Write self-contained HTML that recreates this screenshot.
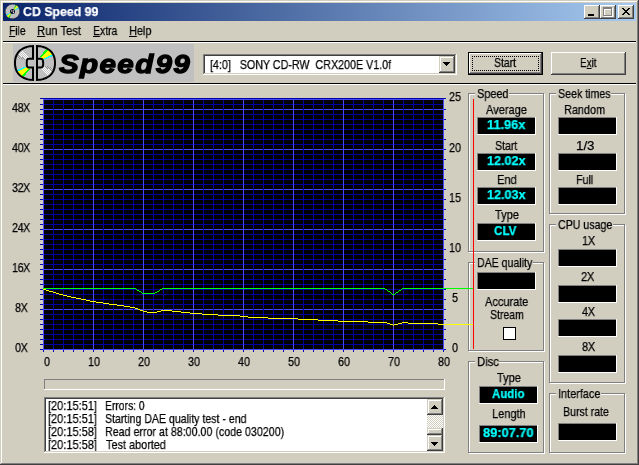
<!DOCTYPE html>
<html><head><meta charset='utf-8'><title>CD Speed 99</title><style>html,body{margin:0;padding:0}
body{width:639px;height:465px;overflow:hidden;position:relative;background:#d1cec0;font:13px/13px "Liberation Sans",sans-serif;color:#000}
body>div,body>svg{position:absolute;display:block}
.t{-webkit-text-stroke:0.25px currentColor;white-space:pre;transform-origin:0 0;height:13px;will-change:transform}
u{text-decoration:underline;text-underline-offset:1px;text-decoration-thickness:1px}
</style></head><body>
<div style='left:1px;top:1px;width:636px;height:1px;background:#fff;'></div>
<div style='left:1px;top:1px;width:1px;height:462px;background:#fff;'></div>
<div style='left:637px;top:1px;width:1px;height:463px;background:#808080;'></div>
<div style='left:1px;top:463px;width:637px;height:1px;background:#808080;'></div>
<div style='left:638px;top:0px;width:1px;height:465px;background:#404040;'></div>
<div style='left:0px;top:464px;width:639px;height:1px;background:#404040;'></div>
<div style='left:3px;top:3px;width:633px;height:18px;background:linear-gradient(90deg,#0a246a,#a6caf0);'></div>
<svg style='left:5px;top:4px' width='16' height='16' viewBox='0 0 16 16'><circle cx='7.5' cy='7.5' r='7.2' fill='#c0c0c0'/><circle cx='7.5' cy='7.5' r='7.2' fill='none' stroke='#303030' stroke-width='0.9' stroke-dasharray='1.1 1.16'/><polygon points='7.50,7.50 10.66,1.03 10.96,1.19 11.26,1.36 11.55,1.55 11.83,1.75' fill='#00e000'/><polygon points='7.50,7.50 11.83,1.75 12.22,2.07 12.59,2.41 12.93,2.78 13.25,3.17' fill='#ffff00'/><polygon points='7.50,7.50 13.25,3.17 13.45,3.45 13.64,3.74 13.81,4.04 13.97,4.34' fill='#00e0ff'/><polygon points='7.50,7.50 4.34,13.97 4.04,13.81 3.74,13.64 3.45,13.45 3.17,13.25' fill='#00e000'/><polygon points='7.50,7.50 3.17,13.25 2.78,12.93 2.41,12.59 2.07,12.22 1.75,11.83' fill='#ffff00'/><polygon points='7.50,7.50 1.75,11.83 1.55,11.55 1.36,11.26 1.19,10.96 1.03,10.66' fill='#00e0ff'/><circle cx='7.5' cy='7.6' r='2.5' fill='#0a0a28'/><circle cx='6.7' cy='6.9' r='0.65' fill='#fff'/><circle cx='8.4' cy='6.9' r='0.65' fill='#fff'/><circle cx='8.4' cy='8.6' r='0.65' fill='#fff'/></svg>
<div class='t' style='left:23.33px;top:5px;transform:scaleX(0.9478);font-weight:bold;color:#fff'>CD Speed 99</div>
<div style='left:584px;top:5px;width:16px;height:14px;background:#d1cec0;'></div>
<div style='left:584px;top:5px;width:15px;height:1px;background:#fff;'></div>
<div style='left:584px;top:5px;width:1px;height:13px;background:#fff;'></div>
<div style='left:584px;top:18px;width:16px;height:1px;background:#404040;'></div>
<div style='left:599px;top:5px;width:1px;height:14px;background:#404040;'></div>
<div style='left:585px;top:17px;width:14px;height:1px;background:#808080;'></div>
<div style='left:598px;top:6px;width:1px;height:12px;background:#808080;'></div>
<div style='left:600px;top:5px;width:16px;height:14px;background:#d1cec0;'></div>
<div style='left:600px;top:5px;width:15px;height:1px;background:#fff;'></div>
<div style='left:600px;top:5px;width:1px;height:13px;background:#fff;'></div>
<div style='left:600px;top:18px;width:16px;height:1px;background:#404040;'></div>
<div style='left:615px;top:5px;width:1px;height:14px;background:#404040;'></div>
<div style='left:601px;top:17px;width:14px;height:1px;background:#808080;'></div>
<div style='left:614px;top:6px;width:1px;height:12px;background:#808080;'></div>
<div style='left:618px;top:5px;width:16px;height:14px;background:#d1cec0;'></div>
<div style='left:618px;top:5px;width:15px;height:1px;background:#fff;'></div>
<div style='left:618px;top:5px;width:1px;height:13px;background:#fff;'></div>
<div style='left:618px;top:18px;width:16px;height:1px;background:#404040;'></div>
<div style='left:633px;top:5px;width:1px;height:14px;background:#404040;'></div>
<div style='left:619px;top:17px;width:14px;height:1px;background:#808080;'></div>
<div style='left:632px;top:6px;width:1px;height:12px;background:#808080;'></div>
<div style='left:588px;top:14px;width:6px;height:2px;background:#000;'></div>
<div style='left:604px;top:8px;width:9px;height:9px;box-sizing:border-box;border:1px solid #fff;border-top:2px solid #fff'></div>
<div style='left:603px;top:7px;width:9px;height:9px;box-sizing:border-box;border:1px solid #808080;border-top:2px solid #808080'></div>
<svg style='left:622px;top:8px' width='8' height='7' viewBox='0 0 8 7' shape-rendering='crispEdges'><path d='M0 0h2v1h1v1h2v-1h1v-1h2v1h-1v1h-1v1h-1v1h1v1h1v1h1v1h-2v-1h-1v-1h-2v1h-1v1h-2v-1h1v-1h1v-1h1v-1h-1v-1h-1v-1h-1z' fill='#000'/></svg>
<div class='t' style='left:8.96px;top:24px;transform:scaleX(0.7922);'><u>F</u>ile</div>
<div class='t' style='left:36.64px;top:24px;transform:scaleX(0.8620);'><u>R</u>un Test</div>
<div class='t' style='left:92.70px;top:24px;transform:scaleX(0.8034);'><u>E</u>xtra</div>
<div class='t' style='left:128.56px;top:24px;transform:scaleX(0.8396);'><u>H</u>elp</div>
<div style='left:3px;top:41px;width:633px;height:1px;background:#000;'></div>
<div style='left:3px;top:42px;width:633px;height:1px;background:#fff;'></div>
<div style='left:3px;top:83px;width:633px;height:1px;background:#000;'></div>
<div style='left:3px;top:84px;width:633px;height:1px;background:#fff;'></div>
<svg style='left:13px;top:44px' width='181' height='38' viewBox='0 0 181 38'>
<rect width='181' height='38' fill='#c0c0c0'/>
<g shape-rendering='crispEdges'><rect x='8' y='6' width='1' height='1' fill='#ffffff'/><rect x='7' y='7' width='1' height='1' fill='#ffffff'/><rect x='9' y='7' width='1' height='1' fill='#ffffff'/><rect x='6' y='8' width='1' height='1' fill='#ffffff'/><rect x='8' y='8' width='1' height='1' fill='#ffffff'/><rect x='10' y='8' width='1' height='1' fill='#ffffff'/><rect x='5' y='9' width='1' height='1' fill='#ffffff'/><rect x='7' y='9' width='1' height='1' fill='#ffffff'/><rect x='9' y='9' width='1' height='1' fill='#ffffff'/><rect x='11' y='9' width='1' height='1' fill='#ffffff'/><rect x='6' y='10' width='1' height='1' fill='#ffffff'/><rect x='8' y='10' width='1' height='1' fill='#ffffff'/><rect x='10' y='10' width='1' height='1' fill='#ffffff'/><rect x='12' y='10' width='1' height='1' fill='#ffffff'/><rect x='7' y='11' width='1' height='1' fill='#ffffff'/><rect x='9' y='11' width='1' height='1' fill='#ffffff'/><rect x='11' y='11' width='1' height='1' fill='#ffffff'/><rect x='13' y='11' width='1' height='1' fill='#ffffff'/><rect x='8' y='12' width='1' height='1' fill='#ffffff'/><rect x='10' y='12' width='1' height='1' fill='#ffffff'/><rect x='12' y='12' width='1' height='1' fill='#ffffff'/><rect x='14' y='12' width='1' height='1' fill='#ffffff'/><rect x='11' y='13' width='1' height='1' fill='#ffffff'/><rect x='13' y='13' width='1' height='1' fill='#ffffff'/><rect x='15' y='13' width='1' height='1' fill='#ffffff'/><rect x='12' y='14' width='1' height='1' fill='#ffffff'/><rect x='14' y='14' width='1' height='1' fill='#ffffff'/><rect x='5' y='11' width='1' height='1' fill='#909090'/><rect x='4' y='12' width='1' height='1' fill='#909090'/><rect x='5' y='12' width='1' height='1' fill='#d0d0d0'/><rect x='6' y='12' width='1' height='1' fill='#909090'/><rect x='7' y='12' width='1' height='1' fill='#d0d0d0'/><rect x='4' y='13' width='1' height='1' fill='#d0d0d0'/><rect x='5' y='13' width='1' height='1' fill='#909090'/><rect x='6' y='13' width='1' height='1' fill='#d0d0d0'/><rect x='7' y='13' width='1' height='1' fill='#909090'/><rect x='8' y='13' width='1' height='1' fill='#d0d0d0'/><rect x='9' y='13' width='1' height='1' fill='#909090'/><rect x='5' y='14' width='1' height='1' fill='#d0d0d0'/><rect x='6' y='14' width='1' height='1' fill='#909090'/><rect x='7' y='14' width='1' height='1' fill='#d0d0d0'/><rect x='8' y='14' width='1' height='1' fill='#909090'/><rect x='9' y='14' width='1' height='1' fill='#d0d0d0'/><rect x='10' y='14' width='1' height='1' fill='#909090'/><rect x='11' y='14' width='1' height='1' fill='#d0d0d0'/><rect x='9' y='15' width='1' height='1' fill='#909090'/><rect x='10' y='15' width='1' height='1' fill='#d0d0d0'/><rect x='11' y='15' width='1' height='1' fill='#909090'/><rect x='12' y='15' width='1' height='1' fill='#d0d0d0'/><rect x='13' y='15' width='1' height='1' fill='#909090'/><polygon points='3.93,25.94 4.01,26.13 4.10,26.32 4.19,26.51 4.28,26.70 4.38,26.89 4.48,27.08 4.58,27.26 4.68,27.45 14.63,22.59 14.59,22.51 14.55,22.43 14.52,22.35 14.48,22.27 14.44,22.19 14.41,22.10 14.38,22.02 14.34,21.94' fill='#00ffff'/><polygon points='4.68,27.45 5.08,28.09 5.51,28.71 5.98,29.31 6.48,29.87 7.00,30.41 7.55,30.91 8.12,31.39 8.72,31.83 16.10,24.70 15.88,24.46 15.67,24.22 15.47,23.96 15.28,23.70 15.10,23.44 14.93,23.16 14.78,22.88 14.63,22.59' fill='#ffff00'/><polygon points='8.72,31.83 8.95,31.99 9.19,32.15 9.43,32.31 9.67,32.45 9.92,32.60 10.16,32.74 10.41,32.88 10.66,33.01 16.84,25.37 16.74,25.29 16.65,25.21 16.55,25.13 16.46,25.05 16.37,24.96 16.28,24.87 16.19,24.79 16.10,24.70' fill='#00ff00'/><rect x='29' y='23' width='1' height='1' fill='#ffffff'/><rect x='31' y='23' width='1' height='1' fill='#ffffff'/><rect x='28' y='24' width='1' height='1' fill='#ffffff'/><rect x='30' y='24' width='1' height='1' fill='#ffffff'/><rect x='32' y='24' width='1' height='1' fill='#ffffff'/><rect x='29' y='25' width='1' height='1' fill='#ffffff'/><rect x='31' y='25' width='1' height='1' fill='#ffffff'/><rect x='33' y='25' width='1' height='1' fill='#ffffff'/><rect x='35' y='25' width='1' height='1' fill='#ffffff'/><rect x='30' y='26' width='1' height='1' fill='#ffffff'/><rect x='32' y='26' width='1' height='1' fill='#ffffff'/><rect x='34' y='26' width='1' height='1' fill='#ffffff'/><rect x='36' y='26' width='1' height='1' fill='#ffffff'/><rect x='31' y='27' width='1' height='1' fill='#ffffff'/><rect x='33' y='27' width='1' height='1' fill='#ffffff'/><rect x='35' y='27' width='1' height='1' fill='#ffffff'/><rect x='37' y='27' width='1' height='1' fill='#ffffff'/><rect x='32' y='28' width='1' height='1' fill='#ffffff'/><rect x='34' y='28' width='1' height='1' fill='#ffffff'/><rect x='36' y='28' width='1' height='1' fill='#ffffff'/><rect x='38' y='28' width='1' height='1' fill='#ffffff'/><rect x='33' y='29' width='1' height='1' fill='#ffffff'/><rect x='35' y='29' width='1' height='1' fill='#ffffff'/><rect x='37' y='29' width='1' height='1' fill='#ffffff'/><rect x='34' y='30' width='1' height='1' fill='#ffffff'/><rect x='36' y='30' width='1' height='1' fill='#ffffff'/><rect x='35' y='31' width='1' height='1' fill='#ffffff'/><rect x='30' y='22' width='1' height='1' fill='#909090'/><rect x='31' y='22' width='1' height='1' fill='#d0d0d0'/><rect x='32' y='22' width='1' height='1' fill='#909090'/><rect x='33' y='22' width='1' height='1' fill='#d0d0d0'/><rect x='34' y='22' width='1' height='1' fill='#909090'/><rect x='32' y='23' width='1' height='1' fill='#d0d0d0'/><rect x='33' y='23' width='1' height='1' fill='#909090'/><rect x='34' y='23' width='1' height='1' fill='#d0d0d0'/><rect x='35' y='23' width='1' height='1' fill='#909090'/><rect x='36' y='23' width='1' height='1' fill='#d0d0d0'/><rect x='37' y='23' width='1' height='1' fill='#909090'/><rect x='38' y='23' width='1' height='1' fill='#d0d0d0'/><rect x='34' y='24' width='1' height='1' fill='#909090'/><rect x='35' y='24' width='1' height='1' fill='#d0d0d0'/><rect x='36' y='24' width='1' height='1' fill='#909090'/><rect x='37' y='24' width='1' height='1' fill='#d0d0d0'/><rect x='38' y='24' width='1' height='1' fill='#909090'/><rect x='39' y='24' width='1' height='1' fill='#d0d0d0'/><rect x='36' y='25' width='1' height='1' fill='#d0d0d0'/><rect x='37' y='25' width='1' height='1' fill='#909090'/><rect x='38' y='25' width='1' height='1' fill='#d0d0d0'/><rect x='39' y='25' width='1' height='1' fill='#909090'/><rect x='38' y='26' width='1' height='1' fill='#909090'/><polygon points='40.07,12.06 39.99,11.87 39.90,11.68 39.81,11.49 39.72,11.30 39.62,11.11 39.52,10.92 39.42,10.74 39.32,10.55 29.37,15.41 29.41,15.49 29.45,15.57 29.48,15.65 29.52,15.73 29.56,15.81 29.59,15.90 29.62,15.98 29.66,16.06' fill='#00ffff'/><polygon points='39.32,10.55 38.92,9.91 38.49,9.29 38.02,8.69 37.52,8.13 37.00,7.59 36.45,7.09 35.88,6.61 35.28,6.17 27.90,13.30 28.12,13.54 28.33,13.78 28.53,14.04 28.72,14.30 28.90,14.56 29.07,14.84 29.22,15.12 29.37,15.41' fill='#ffff00'/><polygon points='35.28,6.17 35.05,6.01 34.81,5.85 34.57,5.69 34.33,5.55 34.08,5.40 33.84,5.26 33.59,5.12 33.34,4.99 27.16,12.63 27.26,12.71 27.35,12.79 27.45,12.87 27.54,12.95 27.63,13.04 27.72,13.13 27.81,13.21 27.90,13.30' fill='#00ff00'/></g>
<g fill='none' stroke='#000' stroke-width='2' stroke-linejoin='miter'>
<path d='M20,14.7 L20.00,2.04 L18.26,2.16 L16.66,2.36 L15.15,2.64 L13.73,3.01 L12.38,3.45 L11.10,3.98 L9.90,4.58 L8.77,5.25 L7.72,6.00 L6.76,6.82 L5.87,7.71 L5.07,8.66 L4.36,9.68 L3.74,10.76 L3.21,11.90 L2.78,13.11 L2.44,14.39 L2.20,15.74 L2.05,17.21 L2.00,19.00 L2.05,20.79 L2.20,22.26 L2.44,23.61 L2.78,24.89 L3.21,26.10 L3.74,27.24 L4.36,28.32 L5.07,29.34 L5.87,30.29 L6.76,31.18 L7.72,32.00 L8.77,32.75 L9.90,33.42 L11.10,34.02 L12.38,34.55 L13.73,34.99 L15.15,35.36 L16.66,35.64 L18.26,35.84 L20.00,35.96 V23.6 H15.7 A2.0,4.45 0 0 1 15.7,14.7 Z'/>
<path d='M24.00,2.04 L25.74,2.16 L27.34,2.36 L28.85,2.64 L30.27,3.01 L31.62,3.45 L32.90,3.98 L34.10,4.58 L35.23,5.25 L36.28,6.00 L37.24,6.82 L38.13,7.71 L38.93,8.66 L39.64,9.68 L40.26,10.76 L40.79,11.90 L41.22,13.11 L41.56,14.39 L41.80,15.74 L41.95,17.21 L42.00,19.00 L41.95,20.79 L41.80,22.26 L41.56,23.61 L41.22,24.89 L40.79,26.10 L40.26,27.24 L39.64,28.32 L38.93,29.34 L38.13,30.29 L37.24,31.18 L36.28,32.00 L35.23,32.75 L34.10,33.42 L32.90,34.02 L31.62,34.55 L30.27,34.99 L28.85,35.36 L27.34,35.64 L25.74,35.84 L24.00,35.96 Z'/>
<path d='M24,14.7 H27.8 A2.4,4.45 0 0 1 27.8,23.6 H24'/>
</g>
</svg>
<div class='t' style='left:59.38px;top:48.5px;transform:scaleX(1.1378);font:italic bold 26px/30px Liberation Sans;-webkit-text-stroke:1.3px #000;letter-spacing:1.2px;color:#000'>Speed<span style="margin-left:0.8px">99</span></div>
<div style='left:203px;top:54px;width:254px;height:21px;background:#fff;'></div>
<div style='left:203px;top:54px;width:253px;height:1px;background:#808080;'></div>
<div style='left:203px;top:54px;width:1px;height:20px;background:#808080;'></div>
<div style='left:204px;top:55px;width:251px;height:1px;background:#404040;'></div>
<div style='left:204px;top:55px;width:1px;height:18px;background:#404040;'></div>
<div style='left:203px;top:74px;width:254px;height:1px;background:#fff;'></div>
<div style='left:456px;top:54px;width:1px;height:21px;background:#fff;'></div>
<div style='left:204px;top:73px;width:252px;height:1px;background:#d1cec0;'></div>
<div style='left:455px;top:55px;width:1px;height:19px;background:#d1cec0;'></div>
<div style='left:439px;top:56px;width:16px;height:17px;background:#d1cec0;'></div>
<div style='left:439px;top:56px;width:15px;height:1px;background:#d1cec0;'></div>
<div style='left:439px;top:56px;width:1px;height:16px;background:#d1cec0;'></div>
<div style='left:440px;top:57px;width:13px;height:1px;background:#fff;'></div>
<div style='left:440px;top:57px;width:1px;height:14px;background:#fff;'></div>
<div style='left:439px;top:72px;width:16px;height:1px;background:#404040;'></div>
<div style='left:454px;top:56px;width:1px;height:17px;background:#404040;'></div>
<div style='left:440px;top:71px;width:14px;height:1px;background:#808080;'></div>
<div style='left:453px;top:57px;width:1px;height:15px;background:#808080;'></div>
<div style='left:443px;top:62px;width:7px;height:1px;background:#000;'></div>
<div style='left:444px;top:63px;width:5px;height:1px;background:#000;'></div>
<div style='left:445px;top:64px;width:3px;height:1px;background:#000;'></div>
<div style='left:446px;top:65px;width:1px;height:1px;background:#000;'></div>
<div class='t' style='left:209.78px;top:58px;transform:scaleX(0.8237);'>[4:0]   SONY CD-RW  CRX200E V1.0f</div>
<div style='left:468px;top:52px;width:75px;height:23px;background:#d1cec0;'></div>
<div style='left:468px;top:52px;width:75px;height:23px;box-sizing:border-box;border:1px solid #000'></div>
<div style='left:469px;top:53px;width:72px;height:1px;background:#fff;'></div>
<div style='left:469px;top:53px;width:1px;height:20px;background:#fff;'></div>
<div style='left:469px;top:73px;width:73px;height:1px;background:#404040;'></div>
<div style='left:541px;top:53px;width:1px;height:21px;background:#404040;'></div>
<div style='left:470px;top:72px;width:71px;height:1px;background:#808080;'></div>
<div style='left:540px;top:54px;width:1px;height:19px;background:#808080;'></div>
<div style='left:472px;top:56px;width:67px;height:15px;box-sizing:border-box;border:1px dotted #000'></div>
<div class='t' style='left:494.30px;top:56px;transform:scaleX(0.8038);'>Start</div>
<div style='left:551px;top:52px;width:75px;height:23px;background:#d1cec0;'></div>
<div style='left:551px;top:52px;width:74px;height:1px;background:#fff;'></div>
<div style='left:551px;top:52px;width:1px;height:22px;background:#fff;'></div>
<div style='left:551px;top:74px;width:75px;height:1px;background:#404040;'></div>
<div style='left:625px;top:52px;width:1px;height:23px;background:#404040;'></div>
<div style='left:552px;top:73px;width:73px;height:1px;background:#808080;'></div>
<div style='left:624px;top:53px;width:1px;height:21px;background:#808080;'></div>
<div class='t' style='left:580.14px;top:56px;transform:scaleX(0.7610);'>E<u>x</u>it</div>
<div class='t' style='left:12.17px;top:101px;transform:scaleX(0.8300);letter-spacing:-0.6px'>48X</div>
<div class='t' style='left:12.17px;top:141px;transform:scaleX(0.8300);letter-spacing:-0.6px'>40X</div>
<div class='t' style='left:12.07px;top:181px;transform:scaleX(0.8300);letter-spacing:-0.6px'>32X</div>
<div class='t' style='left:11.97px;top:221px;transform:scaleX(0.8300);letter-spacing:-0.6px'>24X</div>
<div class='t' style='left:11.86px;top:261px;transform:scaleX(0.8300);letter-spacing:-0.6px'>16X</div>
<div class='t' style='left:14.77px;top:301px;transform:scaleX(0.8300);letter-spacing:-0.6px'>8X</div>
<div class='t' style='left:14.77px;top:341px;transform:scaleX(0.8300);letter-spacing:-0.6px'>0X</div>
<div class='t' style='left:449.38px;top:90px;transform:scaleX(0.8300);'>25</div>
<div class='t' style='left:449.38px;top:141px;transform:scaleX(0.8300);'>20</div>
<div class='t' style='left:449.27px;top:191px;transform:scaleX(0.8300);'>15</div>
<div class='t' style='left:449.27px;top:241px;transform:scaleX(0.8300);'>10</div>
<div class='t' style='left:452.49px;top:291px;transform:scaleX(0.8300);'>5</div>
<div class='t' style='left:452.49px;top:341px;transform:scaleX(0.8300);'>0</div>
<div class='t' style='left:43.59px;top:355px;transform:scaleX(0.8300);'>0</div>
<div class='t' style='left:88.18px;top:355px;transform:scaleX(0.8300);'>10</div>
<div class='t' style='left:138.28px;top:355px;transform:scaleX(0.8300);'>20</div>
<div class='t' style='left:188.38px;top:355px;transform:scaleX(0.8300);'>30</div>
<div class='t' style='left:238.49px;top:355px;transform:scaleX(0.8300);'>40</div>
<div class='t' style='left:288.38px;top:355px;transform:scaleX(0.8300);'>50</div>
<div class='t' style='left:338.28px;top:355px;transform:scaleX(0.8300);'>60</div>
<div class='t' style='left:388.28px;top:355px;transform:scaleX(0.8300);'>70</div>
<div class='t' style='left:438.38px;top:355px;transform:scaleX(0.8300);'>80</div>
<div style='left:469px;top:94px;width:76px;height:159px;box-sizing:border-box;border:1px solid #fff'></div>
<div style='left:468px;top:93px;width:76px;height:159px;box-sizing:border-box;border:1px solid #808080'></div>
<div style='left:475px;top:93px;width:34px;height:2px;background:#d1cec0;'></div>
<div class='t' style='left:477.17px;top:87px;transform:scaleX(0.8389);'>Speed</div>
<div class='t' style='left:485.90px;top:103px;transform:scaleX(0.8484);'>Average</div>
<div style='left:477px;top:117px;width:59px;height:18px;background:#000;'></div>
<div style='left:477px;top:117px;width:58px;height:1px;background:#808080;'></div>
<div style='left:477px;top:117px;width:1px;height:17px;background:#808080;'></div>
<div style='left:477px;top:134px;width:59px;height:1px;background:#fff;'></div>
<div style='left:535px;top:117px;width:1px;height:18px;background:#fff;'></div>
<div class='t' style='left:487.16px;top:118px;transform:scaleX(0.9842);color:#00ffff;font-weight:bold'>11.96x</div>
<div class='t' style='left:495.09px;top:139px;transform:scaleX(0.8151);'>Start</div>
<div style='left:477px;top:153px;width:59px;height:18px;background:#000;'></div>
<div style='left:477px;top:153px;width:58px;height:1px;background:#808080;'></div>
<div style='left:477px;top:153px;width:1px;height:17px;background:#808080;'></div>
<div style='left:477px;top:170px;width:59px;height:1px;background:#fff;'></div>
<div style='left:535px;top:153px;width:1px;height:18px;background:#fff;'></div>
<div class='t' style='left:486.97px;top:154px;transform:scaleX(0.9703);color:#00ffff;font-weight:bold'>12.02x</div>
<div class='t' style='left:496.85px;top:173px;transform:scaleX(0.8471);'>End</div>
<div style='left:477px;top:187px;width:59px;height:18px;background:#000;'></div>
<div style='left:477px;top:187px;width:58px;height:1px;background:#808080;'></div>
<div style='left:477px;top:187px;width:1px;height:17px;background:#808080;'></div>
<div style='left:477px;top:204px;width:59px;height:1px;background:#fff;'></div>
<div style='left:535px;top:187px;width:1px;height:18px;background:#fff;'></div>
<div class='t' style='left:486.97px;top:188px;transform:scaleX(0.9703);color:#00ffff;font-weight:bold'>12.03x</div>
<div class='t' style='left:495.09px;top:208px;transform:scaleX(0.8477);'>Type</div>
<div style='left:477px;top:223px;width:59px;height:18px;background:#000;'></div>
<div style='left:477px;top:223px;width:58px;height:1px;background:#808080;'></div>
<div style='left:477px;top:223px;width:1px;height:17px;background:#808080;'></div>
<div style='left:477px;top:240px;width:59px;height:1px;background:#fff;'></div>
<div style='left:535px;top:223px;width:1px;height:18px;background:#fff;'></div>
<div class='t' style='left:494.25px;top:224px;transform:scaleX(0.8980);color:#00ffff;font-weight:bold'>CLV</div>
<div style='left:469px;top:263px;width:76px;height:89px;box-sizing:border-box;border:1px solid #fff'></div>
<div style='left:468px;top:262px;width:76px;height:89px;box-sizing:border-box;border:1px solid #808080'></div>
<div style='left:475px;top:262px;width:58px;height:2px;background:#d1cec0;'></div>
<div class='t' style='left:476.89px;top:256px;transform:scaleX(0.8135);'>DAE quality</div>
<div style='left:477px;top:272px;width:59px;height:18px;background:#000;'></div>
<div style='left:477px;top:272px;width:58px;height:1px;background:#808080;'></div>
<div style='left:477px;top:272px;width:1px;height:17px;background:#808080;'></div>
<div style='left:477px;top:289px;width:59px;height:1px;background:#fff;'></div>
<div style='left:535px;top:272px;width:1px;height:18px;background:#fff;'></div>
<div class='t' style='left:485.10px;top:295px;transform:scaleX(0.8453);'>Accurate</div>
<div class='t' style='left:490.09px;top:308px;transform:scaleX(0.8099);'>Stream</div>
<div style='left:503px;top:327px;width:13px;height:13px;box-sizing:border-box;border:1px solid #000;background:#fff'></div>
<div style='left:469px;top:362px;width:76px;height:92px;box-sizing:border-box;border:1px solid #fff'></div>
<div style='left:468px;top:361px;width:76px;height:92px;box-sizing:border-box;border:1px solid #808080'></div>
<div style='left:475px;top:361px;width:24px;height:2px;background:#d1cec0;'></div>
<div class='t' style='left:476.83px;top:355px;transform:scaleX(0.8674);'>Disc</div>
<div class='t' style='left:497.09px;top:371px;transform:scaleX(0.8440);'>Type</div>
<div style='left:479px;top:386px;width:59px;height:18px;background:#000;'></div>
<div style='left:479px;top:386px;width:58px;height:1px;background:#808080;'></div>
<div style='left:479px;top:386px;width:1px;height:17px;background:#808080;'></div>
<div style='left:479px;top:403px;width:59px;height:1px;background:#fff;'></div>
<div style='left:537px;top:386px;width:1px;height:18px;background:#fff;'></div>
<div class='t' style='left:492.08px;top:387px;transform:scaleX(0.8806);color:#00ffff;font-weight:bold'>Audio</div>
<div class='t' style='left:492.05px;top:407px;transform:scaleX(0.8474);'>Length</div>
<div style='left:479px;top:425px;width:59px;height:18px;background:#000;'></div>
<div style='left:479px;top:425px;width:58px;height:1px;background:#808080;'></div>
<div style='left:479px;top:425px;width:1px;height:17px;background:#808080;'></div>
<div style='left:479px;top:442px;width:59px;height:1px;background:#fff;'></div>
<div style='left:537px;top:425px;width:1px;height:18px;background:#fff;'></div>
<div class='t' style='left:483.21px;top:426px;transform:scaleX(0.9871);color:#00ffff;font-weight:bold'>89:07.70</div>
<div style='left:550px;top:94px;width:76px;height:121px;box-sizing:border-box;border:1px solid #fff'></div>
<div style='left:549px;top:93px;width:76px;height:121px;box-sizing:border-box;border:1px solid #808080'></div>
<div style='left:556px;top:93px;width:55px;height:2px;background:#d1cec0;'></div>
<div class='t' style='left:558.39px;top:87px;transform:scaleX(0.8175);'>Seek times</div>
<div class='t' style='left:563.86px;top:103px;transform:scaleX(0.8381);'>Random</div>
<div style='left:558px;top:117px;width:59px;height:18px;background:#000;'></div>
<div style='left:558px;top:117px;width:58px;height:1px;background:#808080;'></div>
<div style='left:558px;top:117px;width:1px;height:17px;background:#808080;'></div>
<div style='left:558px;top:134px;width:59px;height:1px;background:#fff;'></div>
<div style='left:616px;top:117px;width:1px;height:18px;background:#fff;'></div>
<div class='t' style='left:575.68px;top:139px;transform:scaleX(1.0242);'>1/3</div>
<div style='left:558px;top:153px;width:59px;height:18px;background:#000;'></div>
<div style='left:558px;top:153px;width:58px;height:1px;background:#808080;'></div>
<div style='left:558px;top:153px;width:1px;height:17px;background:#808080;'></div>
<div style='left:558px;top:170px;width:59px;height:1px;background:#fff;'></div>
<div style='left:616px;top:153px;width:1px;height:18px;background:#fff;'></div>
<div class='t' style='left:575.88px;top:173px;transform:scaleX(0.8211);'>Full</div>
<div style='left:558px;top:187px;width:59px;height:18px;background:#000;'></div>
<div style='left:558px;top:187px;width:58px;height:1px;background:#808080;'></div>
<div style='left:558px;top:187px;width:1px;height:17px;background:#808080;'></div>
<div style='left:558px;top:204px;width:59px;height:1px;background:#fff;'></div>
<div style='left:616px;top:187px;width:1px;height:18px;background:#fff;'></div>
<div style='left:550px;top:225px;width:76px;height:159px;box-sizing:border-box;border:1px solid #fff'></div>
<div style='left:549px;top:224px;width:76px;height:159px;box-sizing:border-box;border:1px solid #808080'></div>
<div style='left:556px;top:224px;width:57px;height:2px;background:#d1cec0;'></div>
<div class='t' style='left:558.39px;top:218px;transform:scaleX(0.8169);'>CPU usage</div>
<div class='t' style='left:581.54px;top:234px;transform:scaleX(0.8571);letter-spacing:-0.6px'>1X</div>
<div style='left:558px;top:249px;width:59px;height:18px;background:#000;'></div>
<div style='left:558px;top:249px;width:58px;height:1px;background:#808080;'></div>
<div style='left:558px;top:249px;width:1px;height:17px;background:#808080;'></div>
<div style='left:558px;top:266px;width:59px;height:1px;background:#fff;'></div>
<div style='left:616px;top:249px;width:1px;height:18px;background:#fff;'></div>
<div class='t' style='left:581.35px;top:270px;transform:scaleX(0.8702);letter-spacing:-0.6px'>2X</div>
<div style='left:558px;top:285px;width:59px;height:18px;background:#000;'></div>
<div style='left:558px;top:285px;width:58px;height:1px;background:#808080;'></div>
<div style='left:558px;top:285px;width:1px;height:17px;background:#808080;'></div>
<div style='left:558px;top:302px;width:59px;height:1px;background:#fff;'></div>
<div style='left:616px;top:285px;width:1px;height:18px;background:#fff;'></div>
<div class='t' style='left:581.79px;top:305px;transform:scaleX(0.8407);letter-spacing:-0.6px'>4X</div>
<div style='left:558px;top:319px;width:59px;height:18px;background:#000;'></div>
<div style='left:558px;top:319px;width:58px;height:1px;background:#808080;'></div>
<div style='left:558px;top:319px;width:1px;height:17px;background:#808080;'></div>
<div style='left:558px;top:336px;width:59px;height:1px;background:#fff;'></div>
<div style='left:616px;top:319px;width:1px;height:18px;background:#fff;'></div>
<div class='t' style='left:581.57px;top:340px;transform:scaleX(0.8552);letter-spacing:-0.6px'>8X</div>
<div style='left:558px;top:355px;width:59px;height:18px;background:#000;'></div>
<div style='left:558px;top:355px;width:58px;height:1px;background:#808080;'></div>
<div style='left:558px;top:355px;width:1px;height:17px;background:#808080;'></div>
<div style='left:558px;top:372px;width:59px;height:1px;background:#fff;'></div>
<div style='left:616px;top:355px;width:1px;height:18px;background:#fff;'></div>
<div style='left:550px;top:394px;width:76px;height:60px;box-sizing:border-box;border:1px solid #fff'></div>
<div style='left:549px;top:393px;width:76px;height:60px;box-sizing:border-box;border:1px solid #808080'></div>
<div style='left:556px;top:393px;width:45px;height:2px;background:#d1cec0;'></div>
<div class='t' style='left:557.95px;top:387px;transform:scaleX(0.8410);'>Interface</div>
<div class='t' style='left:562.79px;top:405px;transform:scaleX(0.8146);'>Burst rate</div>
<div style='left:558px;top:423px;width:59px;height:18px;background:#000;'></div>
<div style='left:558px;top:423px;width:58px;height:1px;background:#808080;'></div>
<div style='left:558px;top:423px;width:1px;height:17px;background:#808080;'></div>
<div style='left:558px;top:440px;width:59px;height:1px;background:#fff;'></div>
<div style='left:616px;top:423px;width:1px;height:18px;background:#fff;'></div>
<svg style='left:40px;top:98px' width='436' height='256' viewBox='0 0 436 256' shape-rendering='crispEdges'><rect x='3' y='1' width='401' height='251' fill='#000'/><rect x='3' y='6' width='401' height='1' fill='#0000a0'/><rect x='3' y='11' width='401' height='1' fill='#4848ff'/><rect x='3' y='16' width='401' height='1' fill='#0000a0'/><rect x='3' y='21' width='401' height='1' fill='#0000a0'/><rect x='3' y='26' width='401' height='1' fill='#0000a0'/><rect x='3' y='31' width='401' height='1' fill='#0000a0'/><rect x='3' y='36' width='401' height='1' fill='#0000a0'/><rect x='3' y='41' width='401' height='1' fill='#0000a0'/><rect x='3' y='46' width='401' height='1' fill='#0000a0'/><rect x='3' y='51' width='401' height='1' fill='#4848ff'/><rect x='3' y='56' width='401' height='1' fill='#0000a0'/><rect x='3' y='61' width='401' height='1' fill='#0000a0'/><rect x='3' y='66' width='401' height='1' fill='#0000a0'/><rect x='3' y='71' width='401' height='1' fill='#0000a0'/><rect x='3' y='76' width='401' height='1' fill='#0000a0'/><rect x='3' y='81' width='401' height='1' fill='#0000a0'/><rect x='3' y='86' width='401' height='1' fill='#0000a0'/><rect x='3' y='91' width='401' height='1' fill='#4848ff'/><rect x='3' y='96' width='401' height='1' fill='#0000a0'/><rect x='3' y='101' width='401' height='1' fill='#0000a0'/><rect x='3' y='106' width='401' height='1' fill='#0000a0'/><rect x='3' y='111' width='401' height='1' fill='#0000a0'/><rect x='3' y='116' width='401' height='1' fill='#0000a0'/><rect x='3' y='121' width='401' height='1' fill='#0000a0'/><rect x='3' y='126' width='401' height='1' fill='#0000a0'/><rect x='3' y='131' width='401' height='1' fill='#4848ff'/><rect x='3' y='136' width='401' height='1' fill='#0000a0'/><rect x='3' y='141' width='401' height='1' fill='#0000a0'/><rect x='3' y='146' width='401' height='1' fill='#0000a0'/><rect x='3' y='151' width='401' height='1' fill='#0000a0'/><rect x='3' y='156' width='401' height='1' fill='#0000a0'/><rect x='3' y='161' width='401' height='1' fill='#0000a0'/><rect x='3' y='166' width='401' height='1' fill='#0000a0'/><rect x='3' y='171' width='401' height='1' fill='#4848ff'/><rect x='3' y='176' width='401' height='1' fill='#0000a0'/><rect x='3' y='181' width='401' height='1' fill='#0000a0'/><rect x='3' y='186' width='401' height='1' fill='#0000a0'/><rect x='3' y='191' width='401' height='1' fill='#0000a0'/><rect x='3' y='196' width='401' height='1' fill='#0000a0'/><rect x='3' y='201' width='401' height='1' fill='#0000a0'/><rect x='3' y='206' width='401' height='1' fill='#0000a0'/><rect x='3' y='211' width='401' height='1' fill='#4848ff'/><rect x='3' y='216' width='401' height='1' fill='#0000a0'/><rect x='3' y='221' width='401' height='1' fill='#0000a0'/><rect x='3' y='226' width='401' height='1' fill='#0000a0'/><rect x='3' y='231' width='401' height='1' fill='#0000a0'/><rect x='3' y='236' width='401' height='1' fill='#0000a0'/><rect x='3' y='241' width='401' height='1' fill='#0000a0'/><rect x='3' y='246' width='401' height='1' fill='#0000a0'/><rect x='13' y='1' width='1' height='251' fill='#0000a0'/><rect x='23' y='1' width='1' height='251' fill='#0000a0'/><rect x='33' y='1' width='1' height='251' fill='#0000a0'/><rect x='43' y='1' width='1' height='251' fill='#0000a0'/><rect x='53' y='1' width='1' height='251' fill='#4848ff'/><rect x='63' y='1' width='1' height='251' fill='#0000a0'/><rect x='73' y='1' width='1' height='251' fill='#0000a0'/><rect x='83' y='1' width='1' height='251' fill='#0000a0'/><rect x='93' y='1' width='1' height='251' fill='#0000a0'/><rect x='103' y='1' width='1' height='251' fill='#4848ff'/><rect x='113' y='1' width='1' height='251' fill='#0000a0'/><rect x='123' y='1' width='1' height='251' fill='#0000a0'/><rect x='133' y='1' width='1' height='251' fill='#0000a0'/><rect x='143' y='1' width='1' height='251' fill='#0000a0'/><rect x='153' y='1' width='1' height='251' fill='#4848ff'/><rect x='163' y='1' width='1' height='251' fill='#0000a0'/><rect x='173' y='1' width='1' height='251' fill='#0000a0'/><rect x='183' y='1' width='1' height='251' fill='#0000a0'/><rect x='193' y='1' width='1' height='251' fill='#0000a0'/><rect x='203' y='1' width='1' height='251' fill='#4848ff'/><rect x='213' y='1' width='1' height='251' fill='#0000a0'/><rect x='223' y='1' width='1' height='251' fill='#0000a0'/><rect x='233' y='1' width='1' height='251' fill='#0000a0'/><rect x='243' y='1' width='1' height='251' fill='#0000a0'/><rect x='253' y='1' width='1' height='251' fill='#4848ff'/><rect x='263' y='1' width='1' height='251' fill='#0000a0'/><rect x='273' y='1' width='1' height='251' fill='#0000a0'/><rect x='283' y='1' width='1' height='251' fill='#0000a0'/><rect x='293' y='1' width='1' height='251' fill='#0000a0'/><rect x='303' y='1' width='1' height='251' fill='#4848ff'/><rect x='313' y='1' width='1' height='251' fill='#0000a0'/><rect x='323' y='1' width='1' height='251' fill='#0000a0'/><rect x='333' y='1' width='1' height='251' fill='#0000a0'/><rect x='343' y='1' width='1' height='251' fill='#0000a0'/><rect x='353' y='1' width='1' height='251' fill='#4848ff'/><rect x='363' y='1' width='1' height='251' fill='#0000a0'/><rect x='373' y='1' width='1' height='251' fill='#0000a0'/><rect x='383' y='1' width='1' height='251' fill='#0000a0'/><rect x='393' y='1' width='1' height='251' fill='#0000a0'/><rect x='0' y='0' width='406' height='1' fill='#0000a0'/><rect x='3' y='1' width='401' height='1' fill='#4848ff'/><rect x='3' y='251' width='401' height='1' fill='#4848ff'/><rect x='3' y='1' width='1' height='251' fill='#4848ff'/><rect x='403' y='1' width='1' height='251' fill='#4848ff'/><rect x='0' y='6' width='3' height='1' fill='#0000b4'/><rect x='0' y='11' width='3' height='1' fill='#0000b4'/><rect x='0' y='16' width='3' height='1' fill='#0000b4'/><rect x='0' y='21' width='3' height='1' fill='#0000b4'/><rect x='0' y='26' width='3' height='1' fill='#0000b4'/><rect x='0' y='31' width='3' height='1' fill='#0000b4'/><rect x='0' y='36' width='3' height='1' fill='#0000b4'/><rect x='0' y='41' width='3' height='1' fill='#0000b4'/><rect x='0' y='46' width='3' height='1' fill='#0000b4'/><rect x='0' y='51' width='3' height='1' fill='#0000b4'/><rect x='0' y='56' width='3' height='1' fill='#0000b4'/><rect x='0' y='61' width='3' height='1' fill='#0000b4'/><rect x='0' y='66' width='3' height='1' fill='#0000b4'/><rect x='0' y='71' width='3' height='1' fill='#0000b4'/><rect x='0' y='76' width='3' height='1' fill='#0000b4'/><rect x='0' y='81' width='3' height='1' fill='#0000b4'/><rect x='0' y='86' width='3' height='1' fill='#0000b4'/><rect x='0' y='91' width='3' height='1' fill='#0000b4'/><rect x='0' y='96' width='3' height='1' fill='#0000b4'/><rect x='0' y='101' width='3' height='1' fill='#0000b4'/><rect x='0' y='106' width='3' height='1' fill='#0000b4'/><rect x='0' y='111' width='3' height='1' fill='#0000b4'/><rect x='0' y='116' width='3' height='1' fill='#0000b4'/><rect x='0' y='121' width='3' height='1' fill='#0000b4'/><rect x='0' y='126' width='3' height='1' fill='#0000b4'/><rect x='0' y='131' width='3' height='1' fill='#0000b4'/><rect x='0' y='136' width='3' height='1' fill='#0000b4'/><rect x='0' y='141' width='3' height='1' fill='#0000b4'/><rect x='0' y='146' width='3' height='1' fill='#0000b4'/><rect x='0' y='151' width='3' height='1' fill='#0000b4'/><rect x='0' y='156' width='3' height='1' fill='#0000b4'/><rect x='0' y='161' width='3' height='1' fill='#0000b4'/><rect x='0' y='166' width='3' height='1' fill='#0000b4'/><rect x='0' y='171' width='3' height='1' fill='#0000b4'/><rect x='0' y='176' width='3' height='1' fill='#0000b4'/><rect x='0' y='181' width='3' height='1' fill='#0000b4'/><rect x='0' y='186' width='3' height='1' fill='#0000b4'/><rect x='0' y='191' width='3' height='1' fill='#0000b4'/><rect x='0' y='196' width='3' height='1' fill='#0000b4'/><rect x='0' y='201' width='3' height='1' fill='#0000b4'/><rect x='0' y='206' width='3' height='1' fill='#0000b4'/><rect x='0' y='211' width='3' height='1' fill='#0000b4'/><rect x='0' y='216' width='3' height='1' fill='#0000b4'/><rect x='0' y='221' width='3' height='1' fill='#0000b4'/><rect x='0' y='226' width='3' height='1' fill='#0000b4'/><rect x='0' y='231' width='3' height='1' fill='#0000b4'/><rect x='0' y='236' width='3' height='1' fill='#0000b4'/><rect x='0' y='241' width='3' height='1' fill='#0000b4'/><rect x='0' y='246' width='3' height='1' fill='#0000b4'/><rect x='0' y='251' width='3' height='1' fill='#0000b4'/><rect x='3' y='252' width='1' height='2' fill='#0000b4'/><rect x='13' y='252' width='1' height='2' fill='#0000b4'/><rect x='23' y='252' width='1' height='2' fill='#0000b4'/><rect x='33' y='252' width='1' height='2' fill='#0000b4'/><rect x='43' y='252' width='1' height='2' fill='#0000b4'/><rect x='53' y='252' width='1' height='2' fill='#0000b4'/><rect x='63' y='252' width='1' height='2' fill='#0000b4'/><rect x='73' y='252' width='1' height='2' fill='#0000b4'/><rect x='83' y='252' width='1' height='2' fill='#0000b4'/><rect x='93' y='252' width='1' height='2' fill='#0000b4'/><rect x='103' y='252' width='1' height='2' fill='#0000b4'/><rect x='113' y='252' width='1' height='2' fill='#0000b4'/><rect x='123' y='252' width='1' height='2' fill='#0000b4'/><rect x='133' y='252' width='1' height='2' fill='#0000b4'/><rect x='143' y='252' width='1' height='2' fill='#0000b4'/><rect x='153' y='252' width='1' height='2' fill='#0000b4'/><rect x='163' y='252' width='1' height='2' fill='#0000b4'/><rect x='173' y='252' width='1' height='2' fill='#0000b4'/><rect x='183' y='252' width='1' height='2' fill='#0000b4'/><rect x='193' y='252' width='1' height='2' fill='#0000b4'/><rect x='203' y='252' width='1' height='2' fill='#0000b4'/><rect x='213' y='252' width='1' height='2' fill='#0000b4'/><rect x='223' y='252' width='1' height='2' fill='#0000b4'/><rect x='233' y='252' width='1' height='2' fill='#0000b4'/><rect x='243' y='252' width='1' height='2' fill='#0000b4'/><rect x='253' y='252' width='1' height='2' fill='#0000b4'/><rect x='263' y='252' width='1' height='2' fill='#0000b4'/><rect x='273' y='252' width='1' height='2' fill='#0000b4'/><rect x='283' y='252' width='1' height='2' fill='#0000b4'/><rect x='293' y='252' width='1' height='2' fill='#0000b4'/><rect x='303' y='252' width='1' height='2' fill='#0000b4'/><rect x='313' y='252' width='1' height='2' fill='#0000b4'/><rect x='323' y='252' width='1' height='2' fill='#0000b4'/><rect x='333' y='252' width='1' height='2' fill='#0000b4'/><rect x='343' y='252' width='1' height='2' fill='#0000b4'/><rect x='353' y='252' width='1' height='2' fill='#0000b4'/><rect x='363' y='252' width='1' height='2' fill='#0000b4'/><rect x='373' y='252' width='1' height='2' fill='#0000b4'/><rect x='383' y='252' width='1' height='2' fill='#0000b4'/><rect x='393' y='252' width='1' height='2' fill='#0000b4'/><rect x='403' y='252' width='1' height='2' fill='#0000b4'/><rect x='404' y='11' width='2' height='1' fill='#0000b4'/><rect x='404' y='21' width='2' height='1' fill='#0000b4'/><rect x='404' y='31' width='2' height='1' fill='#0000b4'/><rect x='404' y='41' width='2' height='1' fill='#0000b4'/><rect x='404' y='51' width='2' height='1' fill='#0000b4'/><rect x='404' y='61' width='2' height='1' fill='#0000b4'/><rect x='404' y='71' width='2' height='1' fill='#0000b4'/><rect x='404' y='81' width='2' height='1' fill='#0000b4'/><rect x='404' y='91' width='2' height='1' fill='#0000b4'/><rect x='404' y='101' width='2' height='1' fill='#0000b4'/><rect x='404' y='111' width='2' height='1' fill='#0000b4'/><rect x='404' y='121' width='2' height='1' fill='#0000b4'/><rect x='404' y='131' width='2' height='1' fill='#0000b4'/><rect x='404' y='141' width='2' height='1' fill='#0000b4'/><rect x='404' y='151' width='2' height='1' fill='#0000b4'/><rect x='404' y='161' width='2' height='1' fill='#0000b4'/><rect x='404' y='171' width='2' height='1' fill='#0000b4'/><rect x='404' y='181' width='2' height='1' fill='#0000b4'/><rect x='404' y='191' width='2' height='1' fill='#0000b4'/><rect x='404' y='201' width='2' height='1' fill='#0000b4'/><rect x='404' y='211' width='2' height='1' fill='#0000b4'/><rect x='404' y='221' width='2' height='1' fill='#0000b4'/><rect x='404' y='231' width='2' height='1' fill='#0000b4'/><rect x='404' y='241' width='2' height='1' fill='#0000b4'/><rect x='404' y='251' width='2' height='1' fill='#0000b4'/><rect x='404' y='0' width='2' height='1' fill='#0000b4'/><rect x='3' y='190' width='93' height='1' fill='#00ff00'/><rect x='96' y='191' width='1' height='1' fill='#00ff00'/><rect x='97' y='192' width='2' height='1' fill='#00ff00'/><rect x='99' y='193' width='2' height='1' fill='#00ff00'/><rect x='101' y='194' width='1' height='1' fill='#00ff00'/><rect x='102' y='195' width='13' height='1' fill='#00ff00'/><rect x='115' y='194' width='2' height='1' fill='#00ff00'/><rect x='117' y='193' width='2' height='1' fill='#00ff00'/><rect x='119' y='192' width='1' height='1' fill='#00ff00'/><rect x='120' y='191' width='2' height='1' fill='#00ff00'/><rect x='122' y='190' width='223' height='1' fill='#00ff00'/><rect x='345' y='191' width='2' height='1' fill='#00ff00'/><rect x='347' y='192' width='1' height='1' fill='#00ff00'/><rect x='348' y='193' width='2' height='1' fill='#00ff00'/><rect x='350' y='194' width='1' height='1' fill='#00ff00'/><rect x='351' y='195' width='1' height='1' fill='#00ff00'/><rect x='352' y='196' width='3' height='1' fill='#00ff00'/><rect x='355' y='195' width='1' height='1' fill='#00ff00'/><rect x='356' y='194' width='2' height='1' fill='#00ff00'/><rect x='358' y='193' width='1' height='1' fill='#00ff00'/><rect x='359' y='192' width='2' height='1' fill='#00ff00'/><rect x='361' y='191' width='1' height='1' fill='#00ff00'/><rect x='362' y='190' width='72' height='1' fill='#00ff00'/><rect x='3' y='191' width='3' height='1' fill='#ffff00'/><rect x='6' y='192' width='3' height='1' fill='#ffff00'/><rect x='9' y='193' width='4' height='1' fill='#ffff00'/><rect x='13' y='194' width='3' height='1' fill='#ffff00'/><rect x='16' y='195' width='3' height='1' fill='#ffff00'/><rect x='19' y='196' width='4' height='1' fill='#ffff00'/><rect x='23' y='197' width='4' height='1' fill='#ffff00'/><rect x='27' y='198' width='4' height='1' fill='#ffff00'/><rect x='31' y='199' width='5' height='1' fill='#ffff00'/><rect x='36' y='200' width='5' height='1' fill='#ffff00'/><rect x='41' y='201' width='5' height='1' fill='#ffff00'/><rect x='46' y='202' width='4' height='1' fill='#ffff00'/><rect x='50' y='203' width='6' height='1' fill='#ffff00'/><rect x='56' y='204' width='7' height='1' fill='#ffff00'/><rect x='63' y='205' width='6' height='1' fill='#ffff00'/><rect x='69' y='206' width='8' height='1' fill='#ffff00'/><rect x='77' y='207' width='7' height='1' fill='#ffff00'/><rect x='84' y='208' width='6' height='1' fill='#ffff00'/><rect x='90' y='209' width='5' height='1' fill='#ffff00'/><rect x='95' y='210' width='3' height='1' fill='#ffff00'/><rect x='98' y='211' width='2' height='1' fill='#ffff00'/><rect x='100' y='212' width='3' height='1' fill='#ffff00'/><rect x='103' y='213' width='4' height='1' fill='#ffff00'/><rect x='107' y='214' width='10' height='1' fill='#ffff00'/><rect x='117' y='213' width='4' height='1' fill='#ffff00'/><rect x='121' y='212' width='11' height='1' fill='#ffff00'/><rect x='132' y='213' width='9' height='1' fill='#ffff00'/><rect x='141' y='214' width='9' height='1' fill='#ffff00'/><rect x='150' y='215' width='12' height='1' fill='#ffff00'/><rect x='162' y='216' width='16' height='1' fill='#ffff00'/><rect x='178' y='217' width='22' height='1' fill='#ffff00'/><rect x='200' y='218' width='8' height='1' fill='#ffff00'/><rect x='208' y='219' width='20' height='1' fill='#ffff00'/><rect x='228' y='220' width='30' height='1' fill='#ffff00'/><rect x='258' y='221' width='20' height='1' fill='#ffff00'/><rect x='278' y='222' width='20' height='1' fill='#ffff00'/><rect x='298' y='223' width='30' height='1' fill='#ffff00'/><rect x='328' y='224' width='19' height='1' fill='#ffff00'/><rect x='347' y='225' width='3' height='1' fill='#ffff00'/><rect x='350' y='226' width='3' height='1' fill='#ffff00'/><rect x='353' y='227' width='1' height='1' fill='#ffff00'/><rect x='354' y='226' width='4' height='1' fill='#ffff00'/><rect x='358' y='225' width='4' height='1' fill='#ffff00'/><rect x='362' y='224' width='6' height='1' fill='#ffff00'/><rect x='368' y='225' width='30' height='1' fill='#ffff00'/><rect x='398' y='226' width='36' height='1' fill='#ffff00'/><rect x='433' y='1' width='1' height='250' fill='#ff0000'/></svg>
<div style='left:44px;top:379px;width:400px;height:1px;background:#808080;'></div>
<div style='left:44px;top:379px;width:1px;height:10px;background:#808080;'></div>
<div style='left:44px;top:389px;width:401px;height:1px;background:#fff;'></div>
<div style='left:444px;top:379px;width:1px;height:11px;background:#fff;'></div>
<div style='left:44px;top:397px;width:401px;height:56px;background:#fff;'></div>
<div style='left:44px;top:397px;width:400px;height:1px;background:#808080;'></div>
<div style='left:44px;top:397px;width:1px;height:55px;background:#808080;'></div>
<div style='left:45px;top:398px;width:398px;height:1px;background:#404040;'></div>
<div style='left:45px;top:398px;width:1px;height:53px;background:#404040;'></div>
<div style='left:44px;top:452px;width:401px;height:1px;background:#fff;'></div>
<div style='left:444px;top:397px;width:1px;height:56px;background:#fff;'></div>
<div style='left:45px;top:451px;width:399px;height:1px;background:#d1cec0;'></div>
<div style='left:443px;top:398px;width:1px;height:54px;background:#d1cec0;'></div>
<div style='left:427px;top:399px;width:16px;height:52px;background:#fff;'></div>
<div style='left:427px;top:415px;width:16px;height:20px;background:repeating-conic-gradient(#fff 0 25%, #d1cec0 0 50%) 0 0/2px 2px'></div>
<div style='left:427px;top:399px;width:16px;height:16px;background:#d1cec0;'></div>
<div style='left:427px;top:399px;width:15px;height:1px;background:#d1cec0;'></div>
<div style='left:427px;top:399px;width:1px;height:15px;background:#d1cec0;'></div>
<div style='left:428px;top:400px;width:13px;height:1px;background:#fff;'></div>
<div style='left:428px;top:400px;width:1px;height:13px;background:#fff;'></div>
<div style='left:427px;top:414px;width:16px;height:1px;background:#404040;'></div>
<div style='left:442px;top:399px;width:1px;height:16px;background:#404040;'></div>
<div style='left:428px;top:413px;width:14px;height:1px;background:#808080;'></div>
<div style='left:441px;top:400px;width:1px;height:14px;background:#808080;'></div>
<div style='left:434px;top:405px;width:1px;height:1px;background:#000;'></div>
<div style='left:433px;top:406px;width:3px;height:1px;background:#000;'></div>
<div style='left:432px;top:407px;width:5px;height:1px;background:#000;'></div>
<div style='left:431px;top:408px;width:7px;height:1px;background:#000;'></div>
<div style='left:427px;top:435px;width:16px;height:16px;background:#d1cec0;'></div>
<div style='left:427px;top:435px;width:15px;height:1px;background:#d1cec0;'></div>
<div style='left:427px;top:435px;width:1px;height:15px;background:#d1cec0;'></div>
<div style='left:428px;top:436px;width:13px;height:1px;background:#fff;'></div>
<div style='left:428px;top:436px;width:1px;height:13px;background:#fff;'></div>
<div style='left:427px;top:450px;width:16px;height:1px;background:#404040;'></div>
<div style='left:442px;top:435px;width:1px;height:16px;background:#404040;'></div>
<div style='left:428px;top:449px;width:14px;height:1px;background:#808080;'></div>
<div style='left:441px;top:436px;width:1px;height:14px;background:#808080;'></div>
<div style='left:431px;top:442px;width:7px;height:1px;background:#000;'></div>
<div style='left:432px;top:443px;width:5px;height:1px;background:#000;'></div>
<div style='left:433px;top:444px;width:3px;height:1px;background:#000;'></div>
<div style='left:434px;top:445px;width:1px;height:1px;background:#000;'></div>
<div style='left:427px;top:428px;width:16px;height:7px;background:#d1cec0;'></div>
<div style='left:427px;top:428px;width:15px;height:1px;background:#d1cec0;'></div>
<div style='left:427px;top:428px;width:1px;height:6px;background:#d1cec0;'></div>
<div style='left:428px;top:429px;width:13px;height:1px;background:#fff;'></div>
<div style='left:428px;top:429px;width:1px;height:4px;background:#fff;'></div>
<div style='left:427px;top:434px;width:16px;height:1px;background:#404040;'></div>
<div style='left:442px;top:428px;width:1px;height:7px;background:#404040;'></div>
<div style='left:428px;top:433px;width:14px;height:1px;background:#808080;'></div>
<div style='left:441px;top:429px;width:1px;height:5px;background:#808080;'></div>
<div class='t' style='left:48.05px;top:399px;transform:scaleX(0.8466);'>[20:15:51]</div>
<div class='t' style='left:105.00px;top:399px;transform:scaleX(0.7959);'>Errors: 0</div>
<div class='t' style='left:48.05px;top:412px;transform:scaleX(0.8466);'>[20:15:51]</div>
<div class='t' style='left:105.19px;top:412px;transform:scaleX(0.8122);'>Starting DAE quality test - end</div>
<div class='t' style='left:48.05px;top:425px;transform:scaleX(0.8466);'>[20:15:58]</div>
<div class='t' style='left:104.98px;top:425px;transform:scaleX(0.8208);'>Read error at 88:00.00 (code 030200)</div>
<div class='t' style='left:48.05px;top:438px;transform:scaleX(0.8466);'>[20:15:58]</div>
<div class='t' style='left:105.59px;top:438px;transform:scaleX(0.8369);'>Test aborted</div>
<div style='left:45px;top:451px;width:399px;height:1px;background:#d1cec0;'></div>
<div style='left:44px;top:452px;width:401px;height:1px;background:#fff;'></div>
</body></html>
